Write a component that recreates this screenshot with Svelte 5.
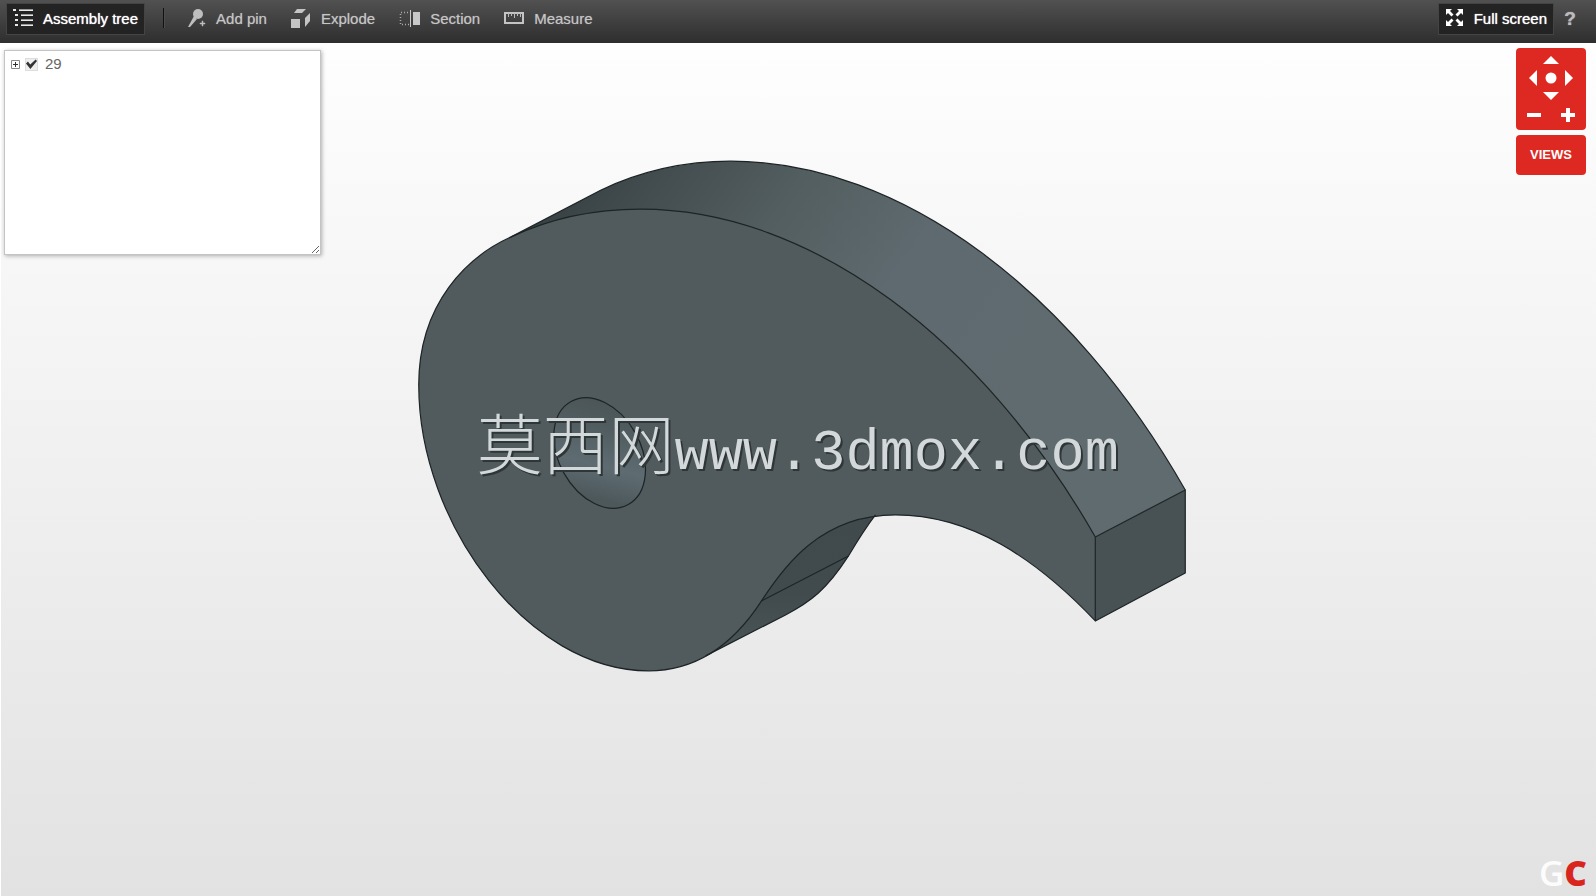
<script>
  let treeOpen = true;
  let expanded = false;
  let checked = true;

  // outlines of the part, in drawing units
  const front =
    'M510 237C550 218 595 209 640 209C812 209 983 341 1095 537V621' +
    'C1035 558 970 515 895 515C820 515 783 567 761 601C739 635 703 671 648 671' +
    'C528 671 418 525 418 385C418 302 468 256 510 237Z';
  const backTop = 'M510 237L600 190C640 171 685 161 730 161C902 161 1073 293 1185 490';
  const backBottom = 'M875 515C865 528 857 541 848 556C826 590 810 602 785 615L705 656';
</script>

<svelte:head>
  <title>Viewer</title>
</svelte:head>

<div class="app">
  <header class="toolbar">
    <button class="tool active" on:click={() => (treeOpen = !treeOpen)}>
      <svg width="20" height="20" viewBox="0 0 20 20" fill="#e8e8e8">
        <path d="M0 1h3v2H0zM2 6h3v2H2zM2 11h3v2H2zM2 16h3v2H2zM6 2h14v1H6zM8 7h12v1H8zM8 12h12v1H8zM8 17h12v1H8z" />
        <path d="M6 1h14v2H6zM8 6h12v2H8zM8 11h12v2H8zM8 16h12v2H8z" opacity=".6" />
      </svg>
      Assembly tree
    </button>
    <span class="separator"></span>
    <button class="tool">
      <svg width="18" height="20" viewBox="0 0 18 20" fill="#bebebe">
        <circle cx="10" cy="6" r="5" />
        <path d="M6 8l3 3-7 8H0z" />
        <path d="M12 15h2v-2h1v2h2v1h-2v2h-1v-2h-2z" stroke="#bebebe" stroke-width=".5" />
      </svg>
      Add pin
    </button>
    <button class="tool">
      <svg width="20" height="20" viewBox="0 0 20 20" fill="#c4c4c4">
        <path d="M0 11h9v9H0z" />
        <path d="M6 1h9l-4 4H3z" />
        <path d="M14 10l5-5v8l-5 6z" />
      </svg>
      Explode
    </button>
    <button class="tool">
      <svg width="21" height="20" viewBox="0 0 21 20">
        <path d="M9 4.500H1.500V16.500H10" fill="none" stroke="#aaa" stroke-dasharray="1 2" stroke-width="1.500" />
        <path d="M11 2h1v17h-1zM14 4h7v13h-7z" fill="#c8c8c8" />
      </svg>
      Section
    </button>
    <button class="tool">
      <svg width="20" height="20" viewBox="0 0 20 20">
        <path d="M1 5h18v10H1z" fill="none" stroke="#c4c4c4" stroke-width="2" />
        <path d="M4.500 5v4M7.500 5v3M10.500 5v5M13.500 5v3M16.500 5v4" stroke="#b8b8b8" />
      </svg>
      Measure
    </button>

    <div class="right">
      <button class="tool active">
        <svg width="19" height="20" viewBox="0 0 19 20" fill="#fff">
          <path d="M1 1h6L5 3l3.500 3.500-2 2L3 5 1 7z" />
          <path d="M18 1h-6l2 2-3.500 3.500 2 2L16 5l2 2z" />
          <path d="M1 18h6l-2-2 3.500-3.500-2-2L3 14l-2-2z" />
          <path d="M18 18h-6l2-2-3.500-3.500 2-2L16 14l2-2z" />
        </svg>
        Full screen
      </button>
      <button class="help" aria-label="Help">?</button>
    </div>
  </header>

  <main class="viewer">
    <svg class="model" viewBox="0 43 1596 853">
      <defs>
        <linearGradient id="rim" gradientUnits="userSpaceOnUse" x1="540" y1="200" x2="1000" y2="520">
          <stop offset="0" stop-color="#363f41" />
          <stop offset=".16" stop-color="#444d4f" />
          <stop offset=".36" stop-color="#535e60" />
          <stop offset=".6" stop-color="#5e6a6f" />
          <stop offset="1" stop-color="#5f6b6f" />
        </linearGradient>
        <linearGradient id="bore" gradientUnits="userSpaceOnUse" x1="560" y1="400" x2="640" y2="475">
          <stop offset="0" stop-color="#495254" />
          <stop offset=".35" stop-color="#505c5f" />
          <stop offset=".7" stop-color="#5e6c72" />
          <stop offset="1" stop-color="#4d585b" />
        </linearGradient>
        <linearGradient id="under" x1="0" y1="0" x2="0" y2="1">
          <stop offset="0" stop-color="#404a4c" />
          <stop offset=".6" stop-color="#414b4d" />
          <stop offset="1" stop-color="#4b5658" />
        </linearGradient>
      </defs>
      <path d="{backTop}L1095 537L700 400Z" fill="url(#rim)" />
      <path d="{backBottom}L720 600L800 500Z" fill="url(#under)" />
      <path d="M1095 537L1185 490V573L1095 621Z" fill="#485153" />
      <path d={front} fill="#515a5c" />
      <ellipse cx="599" cy="453" rx="59" ry="41" transform="rotate(61 599 453)" fill="url(#bore)" />
      <g class="edges">
        <path d={front} />
        <path d={backTop} />
        <path d={backBottom} />
        <ellipse cx="599" cy="453" rx="59" ry="41" transform="rotate(61 599 453)" />
        <path d="M1095 537L1185 490V573L1095 621M761 601L848 556" />
      </g>
      <text class="watermark" x="476" y="469"><tspan class="han">莫西网</tspan>www.3dmox.com</text>
    </svg>

    {#if treeOpen}
      <div class="tree">
        <div class="node">
          <button class="expander" aria-label="Expand" on:click={() => (expanded = !expanded)}>
            <svg width="9" height="9" viewBox="0 0 9 9" fill="none" stroke="#888">
              <path d="M.5 .5h8v8h-8z" />
              <path d="M2 4.500h5M4.500 2v5" stroke="#333" />
            </svg>
          </button>
          <input id="node-29" type="checkbox" bind:checked />
          <label for="node-29">29</label>
        </div>
      </div>
    {/if}

    <div class="controls">
      <div class="pad">
        <div class="pan">
          <button class="up" aria-label="Pan up"><svg viewBox="0 0 18 18"><path d="M9 5l8 8H1z" /></svg></button>
          <button class="prev" aria-label="Pan left"><svg viewBox="0 0 18 18"><path d="M5 9l8-8v16z" /></svg></button>
          <button class="home" aria-label="Reset"><svg viewBox="0 0 18 18"><circle cx="9" cy="9" r="5.500" /></svg></button>
          <button class="next" aria-label="Pan right"><svg viewBox="0 0 18 18"><path d="M13 9L5 1v16z" /></svg></button>
          <button class="down" aria-label="Pan down"><svg viewBox="0 0 18 18"><path d="M9 13l8-8H1z" /></svg></button>
        </div>
        <div class="zoom">
          <button aria-label="Zoom out"><svg viewBox="0 0 18 18"><path d="M2 7h14v4H2z" /></svg></button>
          <button aria-label="Zoom in"><svg viewBox="0 0 18 18"><path d="M7 2h4v5h5v4h-5v5H7v-5H2V7h5z" /></svg></button>
        </div>
      </div>
      <button class="views">VIEWS</button>
    </div>

    <div class="logo"><span>G</span><b>C</b></div>
  </main>
</div>

<style>
  :global(body) {
    margin: 0;
  }
  .app {
    display: flex;
    flex-direction: column;
    height: 100vh;
    font-family: Arial, "Liberation Sans", sans-serif;
    font-size: 15px;
  }
  button {
    display: flex;
    align-items: center;
    justify-content: center;
    margin: 0;
    padding: 0;
    border: 0;
    background: none;
    color: inherit;
    font: inherit;
    cursor: pointer;
  }
  .toolbar {
    display: flex;
    align-items: flex-start;
    box-sizing: border-box;
    height: 43px;
    flex: none;
    padding: 3px 10px 0 6px;
    background: linear-gradient(#515151, #2e2e2e);
    color: #c6c6c6;
  }
  .tool {
    box-sizing: border-box;
    height: 32px;
    padding: 0 12px 2px;
    gap: 10px;
    white-space: nowrap;
    text-shadow: 0 0 1px rgba(255, 255, 255, 0.4);
  }
  .active {
    padding: 0 6px 2px;
    border: 1px solid #444;
    background: #232323;
    color: #fff;
    text-shadow: 0 0 1px #fff;
  }
  .separator {
    width: 1px;
    height: 20px;
    margin: 5px 11px 0 18px;
    background: #111;
    border-right: 1px solid #4c4c4c;
  }
  .right {
    display: flex;
    margin-left: auto;
  }
  .help {
    width: 32px;
    height: 31px;
    color: #bbb;
    font-size: 19px;
    font-weight: bold;
    text-shadow: 0 0 1px #bbb;
  }
  .viewer {
    position: relative;
    flex: 1;
    min-height: 0;
    background: linear-gradient(#fefefe, #e2e2e2);
    border-left: 1px solid #fff;
  }
  .model {
    display: block;
    width: 100%;
    height: 100%;
  }
  .edges {
    fill: none;
    stroke: #1d2426;
    stroke-width: 1.2;
    stroke-linejoin: round;
  }
  .watermark {
    fill: #d3d9da;
    font-family: "Liberation Mono", monospace;
    font-size: 57px;
    text-shadow: 2px 2px 0 #2f3637;
  }
  .han {
    font-family: "Noto Sans CJK SC", sans-serif;
    font-size: 66px;
    font-weight: 300;
  }
  .tree {
    position: absolute;
    top: 7px;
    left: 3px;
    box-sizing: border-box;
    width: 317px;
    height: 205px;
    padding: 5px 6px;
    overflow: auto;
    resize: both;
    border: 1px solid #c4c4c4;
    background: #fff;
    box-shadow: 1px 1px 4px rgba(0, 0, 0, 0.3);
    color: #666;
  }
  .node {
    display: flex;
    align-items: center;
    height: 16px;
    line-height: 16px;
  }
  input {
    appearance: none;
    width: 13px;
    height: 13px;
    margin: 0 7px 0 5px;
    border: 1px solid #ddd;
    background: #eee;
  }
  input:checked::before {
    content: "";
    display: block;
    height: 11px;
    background: #333;
    clip-path: polygon(0 45%, 18% 28%, 38% 55%, 88% 8%, 100% 22%, 40% 95%);
  }
  .controls {
    position: absolute;
    top: 5px;
    right: 10px;
    display: flex;
    flex-direction: column;
    gap: 5px;
    width: 70px;
  }
  .pad,
  .views {
    border-radius: 4px;
    background: #dd2922;
    color: #fff;
  }
  .pad {
    box-sizing: border-box;
    height: 82px;
    padding-top: 3px;
  }
  .pad svg {
    width: 18px;
    height: 18px;
    fill: #fff;
  }
  .pan {
    display: grid;
    grid-template-columns: repeat(3, 18px);
    grid-template-areas: ". up ." "prev home next" ". down .";
    justify-content: center;
  }
  .up {
    grid-area: up;
  }
  .prev {
    grid-area: prev;
  }
  .home {
    grid-area: home;
  }
  .next {
    grid-area: next;
  }
  .down {
    grid-area: down;
  }
  .zoom {
    display: flex;
    justify-content: space-between;
    padding: 1px 9px;
  }
  .views {
    height: 40px;
    padding-bottom: 2px;
    font-size: 13px;
    font-weight: bold;
  }
  .logo {
    position: absolute;
    right: 9px;
    bottom: 6px;
    font-family: "Open Sans", sans-serif;
    font-size: 35px;
    font-weight: 600;
    line-height: 34px;
    color: #fcfcfc;
  }
  .logo b {
    color: #d8261f;
    font-weight: 800;
  }
</style>
